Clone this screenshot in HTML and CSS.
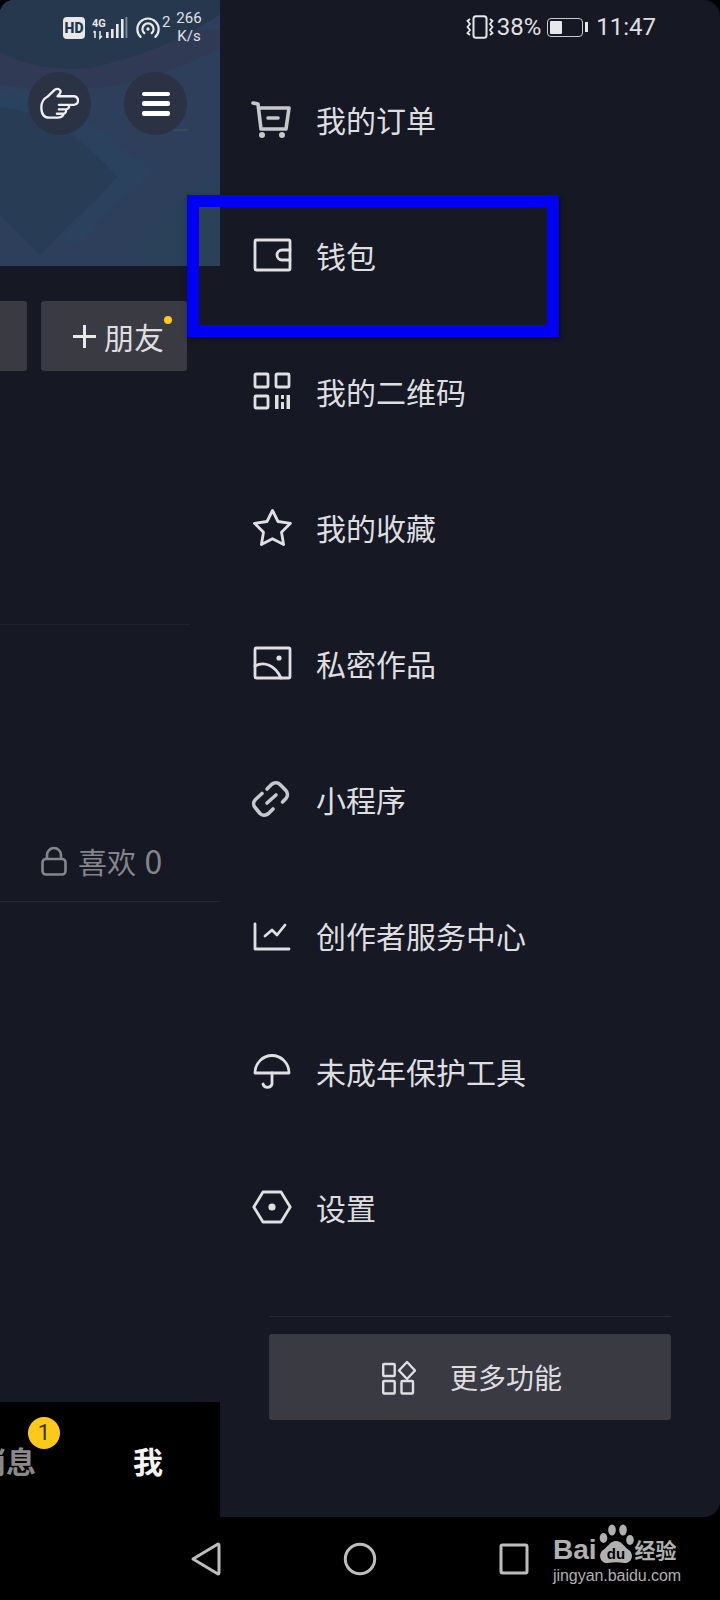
FILE: index.html
```html
<!DOCTYPE html>
<html lang="zh">
<head>
<meta charset="utf-8">
<title>我的</title>
<link rel="stylesheet" href="styles.css">
</head>
<body>
<div class="phone">
  <div class="main">
    <section class="profile">
      <div class="hero">
        <svg class="hero-art" viewBox="0 0 220 266" aria-hidden="true">
          <rect width="220" height="266" fill="#2d3f5a"/>
          <path d="M0 30 H220 V48 Q150 84 90 88 Q40 92 0 84 Z" fill="#303a54"/>
          <path d="M0 90 Q45 84 85 118 L153 170 L75 247 L64 236 L118 177 L60 120 L0 108 Z" fill="#2a425d"/>
          <path d="M0 107 Q60 112 117 177 L40 255 L0 215 Z" fill="#283d55"/>
          <path d="M130 250 L208 172 L220 184 L220 266 L145 266 Z" fill="#2b4059"/>
          <path d="M0 0 H220 V14 Q170 50 90 68 Q35 72 0 52 Z" fill="#25384e"/>
          <path d="M160 130 H188" stroke="#36495f" stroke-width="2"/>
        </svg>
        <div class="status status-left">
          <span class="hd">HD</span>
          <svg class="sig" viewBox="0 0 36 24" aria-hidden="true">
            <rect x="14" y="16" width="2.6" height="6" fill="#e8e8ea"/>
            <rect x="19" y="13" width="2.6" height="9" fill="#e8e8ea"/>
            <rect x="24" y="8" width="2.6" height="14" fill="#e8e8ea"/>
            <rect x="29" y="3" width="2.6" height="19" fill="#e8e8ea"/>
            <rect x="33.4" y="1" width="2" height="21" fill="#7c8592"/>
            <path d="M3 22 V15 M1.5 16.5 L3 15 M8 15 V22 L10 20" stroke="#e8e8ea" stroke-width="1.6" fill="none"/>
            <text x="0" y="11" class="sig-text">4G</text>
          </svg>
          <svg class="hot" viewBox="0 0 28 24" aria-hidden="true">
            <path d="M6 21 A11.5 11.5 0 1 1 22 21" fill="none" stroke="#e8e8ea" stroke-width="2.4" stroke-linecap="round"/>
            <path d="M10 17 A6 6 0 1 1 18 17" fill="none" stroke="#e8e8ea" stroke-width="2.4" stroke-linecap="round"/>
            <circle cx="14" cy="12.5" r="1.8" fill="#e8e8ea"/>
          </svg>
          <sup class="hot-n">2</sup>
          <span class="speed">266<br>K/s</span>
        </div>
        <div class="hero-actions">
          <button class="round" aria-label="手势">
            <svg class="hand" viewBox="124 260 124 100" aria-hidden="true">
              <path d="M131 322 C131 303 138 296 150 289 L172 268 C182 262 194 270 187 280 L180 288 L230 288 C246 290 246 312 230 314 L212 314 C217 318 216 326 206 328 L204 328 C208 332 205 340 198 341 C199 348 190 353 180 353 L155 353 C140 353 131 342 131 322 Z M184 314 H212 M184 328 H204 M178 341 H198" fill="none" stroke="#f0f0f2" stroke-width="7" stroke-linejoin="round" stroke-linecap="round"/>
            </svg>
          </button>
          <button class="round" aria-label="菜单">
            <span class="burger"><i></i><i></i><i></i></span>
          </button>
        </div>
      </div>
      <div class="actions">
        <div class="btn btn-cut"></div>
        <div class="btn btn-friend">
          <span class="plus"></span>
          <span>朋友</span>
          <span class="dot"></span>
        </div>
      </div>
      <div class="rule rule-short"></div>
      <div class="likes">
        <svg class="lock" viewBox="0 0 26 30" aria-hidden="true">
          <path d="M6 13 V9 A7 7 0 0 1 20 9 V13" fill="none" stroke="#85868c" stroke-width="2.6"/>
          <rect x="1.5" y="13" width="23" height="15.5" rx="3.5" fill="none" stroke="#85868c" stroke-width="2.6"/>
        </svg>
        <span>喜欢 <span class="likes-n">0</span></span>
      </div>
      <div class="rule"></div>
      <div class="tabs">
        <span class="tab tab-msg">消息<span class="badge">1</span></span>
        <span class="tab tab-me">我</span>
      </div>
    </section>

    <aside class="drawer">
      <div class="status status-right">
        <svg class="vib" viewBox="0 0 28 24" aria-hidden="true">
          <rect x="7.5" y="1.2" width="13" height="21.6" rx="2.5" fill="none" stroke="#e8e8ea" stroke-width="2"/>
          <path d="M4 4 L1.5 6 L4 9 L1.5 12 L4 15 L1.5 18 L4 20 M24 4 L26.5 6 L24 9 L26.5 12 L24 15 L26.5 18 L24 20" fill="none" stroke="#e8e8ea" stroke-width="1.8"/>
        </svg>
        <span class="pct">38%</span>
        <span class="battery"><span class="battery-fill"></span></span>
        <span class="clock">11:47</span>
      </div>
      <ul class="menu">
        <li class="item">
          <svg class="ico" viewBox="0 0 44 40" aria-hidden="true"><path class="st grey thick" d="M3 4 L8 5 L11 30 H36 L39 9 H10"/><path class="st grey thick" d="M18 19 H28"/><circle class="fl grey-f" cx="12" cy="36" r="3"/><circle class="fl grey-f" cx="32" cy="36" r="3"/></svg>
          <span>我的订单</span>
        </li>
        <li class="item">
          <svg class="ico" viewBox="0 0 44 40" aria-hidden="true"><rect class="st" x="5" y="5" width="35" height="30" rx="1.5"/><path class="st" d="M40 15 H32 A5 5 0 0 0 32 25 H40"/></svg>
          <span>钱包</span>
        </li>
        <li class="item">
          <svg class="ico" viewBox="0 0 44 40" aria-hidden="true"><rect class="st" x="5" y="3" width="13" height="13" rx="1"/><rect class="st" x="26" y="3" width="13" height="13" rx="1"/><rect class="st" x="5" y="25" width="13" height="12" rx="1"/><path class="fl" d="M25 24 H28.5 V38 H25 Z M31 24 H34 V28 H31 Z M31 31 H34 V38 H31 Z M36.5 24 H40 V38 H36.5 Z"/></svg>
          <span>我的二维码</span>
        </li>
        <li class="item">
          <svg class="ico" viewBox="0 0 44 40" aria-hidden="true"><path class="st" d="M22.5 3.5 L28 14.5 L40.5 16.3 L31.5 25.2 L33.6 37.5 L22.5 31.7 L11.4 37.5 L13.5 25.2 L4.5 16.3 L17 14.5 Z"/></svg>
          <span>我的收藏</span>
        </li>
        <li class="item">
          <svg class="ico" viewBox="0 0 44 40" aria-hidden="true"><rect class="st" x="5" y="5" width="35" height="30" rx="1.5"/><circle class="fl" cx="29" cy="15" r="2.6"/><path class="st" d="M5 23 C14 18 25 22 31 35"/></svg>
          <span>私密作品</span>
        </li>
        <li class="item">
          <svg class="ico" viewBox="0 0 44 40" aria-hidden="true"><path class="st thick grey" d="M17 10 L21.5 5.5 C24.5 3 28 3.5 30 5.5 L35.5 11 C38 13.5 38 17 36 19.5 L32.5 23"/><path class="st thick grey" d="M23 30 L18.5 34.5 C15.5 37 12 36.5 10 34.5 L5.5 29 C3 26.5 3 23 5.5 20.5 L12 14.5"/><path class="st thick grey" d="M17 24 L26 16"/></svg>
          <span>小程序</span>
        </li>
        <li class="item">
          <svg class="ico" viewBox="0 0 44 40" aria-hidden="true"><path class="st" d="M5 9 V34 H39"/><path class="st" d="M15 21 L22 15 L27 20 L35 10"/></svg>
          <span>创作者服务中心</span>
        </li>
        <li class="item">
          <svg class="ico" viewBox="0 0 44 40" aria-hidden="true"><path class="st" d="M5 22 A17 17.5 0 0 1 39 22 Z"/><path class="st" d="M22 22 V33 A4.7 4.7 0 0 1 13 33"/></svg>
          <span>未成年保护工具</span>
        </li>
        <li class="item">
          <svg class="ico" viewBox="0 0 44 40" aria-hidden="true"><path class="st" d="M3.8 20 L13 5 H31 L40.2 20 L31 35 H13 Z"/><circle class="fl" cx="22" cy="20" r="3.6"/></svg>
          <span>设置</span>
        </li>
      </ul>
      <div class="drawer-foot">
        <div class="more">
          <svg class="more-ico" viewBox="0 0 34 36" aria-hidden="true">
            <rect class="st thin" x="1.2" y="5" width="11.5" height="12" rx="1"/>
            <path class="st thin" d="M25 3 L33 11.5 L25 20 L17 11.5 Z"/>
            <rect class="st thin" x="1.2" y="22" width="11.5" height="12.5" rx="1"/>
            <rect class="st thin" x="19.5" y="22" width="11.5" height="12.5" rx="1"/>
          </svg>
          <span>更多功能</span>
        </div>
      </div>
    </aside>
  </div>

  <nav class="navbar">
    <svg class="nav-ico" viewBox="0 0 40 36" aria-hidden="true"><path d="M7 18 L32 3 Q33 3 33 5 V31 Q33 33 32 33 Z" fill="none" stroke="#bdbdbd" stroke-width="3" stroke-linejoin="round"/></svg>
    <svg class="nav-ico" viewBox="0 0 40 36" aria-hidden="true"><circle cx="20" cy="18" r="14.7" fill="none" stroke="#bdbdbd" stroke-width="3"/></svg>
    <svg class="nav-ico" viewBox="0 0 40 36" aria-hidden="true"><rect x="7" y="4" width="26" height="28" rx="1.5" fill="none" stroke="#bdbdbd" stroke-width="3"/></svg>
  </nav>

  <div class="watermark">
    <div class="wm-top">
      <span class="wm-bai">Bai</span>
      <svg class="wm-paw" viewBox="0 0 40 42" aria-hidden="true">
        <ellipse cx="14" cy="8" rx="3.8" ry="5.5" fill="#b0b0b0"/>
        <ellipse cx="25" cy="8" rx="3.8" ry="5.5" fill="#b0b0b0"/>
        <ellipse cx="5.5" cy="16" rx="3.8" ry="5" fill="#b0b0b0"/>
        <ellipse cx="32" cy="18" rx="3.8" ry="5" fill="#b0b0b0"/>
        <path d="M18 19 C24 19 26 25 31 28 C37 33 33 42 26 41 C21 40 15 40 10 41 C3 42 -1 33 5 28 C10 25 12 19 18 19 Z" fill="#b0b0b0"/>
        <text x="18" y="37" class="wm-du">du</text>
      </svg>
      <span class="wm-jy">经验</span>
    </div>
    <div class="wm-url">jingyan.baidu.com</div>
  </div>

  <div class="highlight"></div>
</div>
</body>
</html>
```

FILE: styles.css
```css
* { box-sizing: border-box; margin: 0; padding: 0; }

html, body { background: #000; }

body {
  width: 720px;
  height: 1600px;
  overflow: hidden;
  font-family: "Noto Sans CJK SC", "Noto Sans", sans-serif;
  color: #e0e0e2;
}

.phone {
  position: relative;
  width: 720px;
  height: 1600px;
  display: flex;
  flex-direction: column;
  background: #000;
}

.main {
  display: flex;
  height: 1517px;
}

/* left, partly covered profile page */
.profile {
  position: relative;
  width: 220px;
  height: 1517px;
  display: flex;
  flex-direction: column;
  overflow: hidden;
  background: #161823;
  border-top-left-radius: 14px;
}

.hero {
  position: relative;
  height: 266px;
  flex: none;
}

.hero-art {
  position: absolute;
  inset: 0;
  width: 220px;
  height: 266px;
  display: block;
}

.status {
  display: flex;
  align-items: center;
  font-family: Roboto, "Noto Sans", sans-serif;
}

.status-left {
  position: relative;
  height: 54px;
  padding-left: 63px;
  color: #e0e0e2;
}

.hd {
  width: 22px;
  height: 22px;
  border-radius: 4px;
  background: #e8e8ea;
  color: #22364a;
  font-size: 14px;
  font-weight: 900;
  line-height: 22px;
  text-align: center;
  margin-top: 1px;
}

.sig {
  width: 36px;
  height: 24px;
  margin-left: 7px;
  margin-top: 1px;
}

.sig-text {
  font-family: Roboto, sans-serif;
  font-size: 11px;
  font-weight: 700;
  fill: #e8e8ea;
}

.hot {
  width: 26px;
  height: 23px;
  margin-left: 7px;
  margin-top: 2px;
}

.hot-n {
  font-size: 15px;
  line-height: 1;
  margin-left: 1px;
  margin-top: -10px;
  width: 9px;
}

.speed {
  font-size: 15px;
  line-height: 18px;
  text-align: center;
  width: 30px;
  margin-left: 3px;
  margin-top: -1px;
}

.hero-actions {
  position: relative;
  display: flex;
  gap: 33px;
  padding-left: 28px;
  margin-top: 18px;
}

.round {
  width: 63px;
  height: 63px;
  border: 0;
  border-radius: 50%;
  background: #2a3243;
  display: flex;
  align-items: center;
  justify-content: center;
}

.hand {
  width: 41px;
  height: 33px;
  display: block;
}

.burger {
  width: 28px;
  height: 24px;
  display: flex;
  flex-direction: column;
  justify-content: space-between;
}

.burger i {
  display: block;
  height: 4.5px;
  border-radius: 2px;
  background: #fff;
}

.actions {
  display: flex;
  justify-content: flex-end;
  gap: 14px;
  height: 70px;
  margin-top: 35px;
  padding-right: 33px;
  flex: none;
}

.btn {
  height: 70px;
  border-radius: 3px;
  background: #3a3a43;
  flex: none;
}

.btn-cut { width: 100px; }

.btn-friend {
  position: relative;
  width: 146px;
  display: flex;
  align-items: center;
  gap: 8px;
  padding-left: 32px;
  font-size: 30px;
  line-height: 70px;
  color: #dedee0;
}

.plus {
  position: relative;
  width: 23px;
  height: 23px;
  flex: none;
}

.plus::before,
.plus::after {
  content: "";
  position: absolute;
  background: #e9e9ea;
}

.plus::before { left: 0; right: 0; top: 10px; height: 3px; }
.plus::after { top: 0; bottom: 0; left: 10px; width: 3px; }

.dot {
  position: absolute;
  right: 15px;
  top: 15px;
  width: 8px;
  height: 8px;
  border-radius: 50%;
  background: #fcc81a;
}

.rule {
  height: 1px;
  flex: none;
  background: #262833;
}

.rule-short {
  width: 190px;
  margin-top: 253px;
  background: #20222d;
}

.likes {
  display: flex;
  align-items: center;
  gap: 11px;
  height: 78px;
  margin-top: 198px;
  padding-left: 41px;
  padding-bottom: 2px;
  font-size: 29px;
  color: #85868c;
  flex: none;
}

.likes-n {
  font-size: 32px;
  line-height: 1;
  margin-left: 2px;
}

.lock {
  width: 26px;
  height: 30px;
  flex: none;
}

.tabs {
  margin-top: auto;
  height: 115px;
  flex: none;
  background: #000;
  display: flex;
  justify-content: flex-end;
  align-items: center;
  gap: 97px;
  padding-right: 57px;
  font-size: 30px;
  font-weight: 700;
}

.tab {
  position: relative;
  flex: none;
  line-height: 40px;
}

.tab-msg { color: #8a8a8a; }
.tab-me { color: #f4f4f4; }

.badge {
  position: absolute;
  right: -24px;
  top: -23px;
  width: 32px;
  height: 32px;
  border-radius: 50%;
  background: #fcc81a;
  color: #3a3216;
  font-family: Roboto, sans-serif;
  font-size: 22px;
  font-weight: 400;
  line-height: 32px;
  text-align: center;
}

/* right drawer */
.drawer {
  width: 500px;
  height: 1517px;
  background: #161823;
  border-top-right-radius: 16px;
  border-bottom-right-radius: 16px;
  display: flex;
  flex-direction: column;
}

.status-right {
  height: 51px;
  padding-top: 3px;
  padding-right: 64px;
  justify-content: flex-end;
  color: #e0e0e2;
}

.vib {
  width: 28px;
  height: 24px;
  margin-right: 3px;
}

.pct {
  font-size: 24px;
  line-height: 30px;
  margin-right: 6px;
}

.battery {
  position: relative;
  width: 36px;
  height: 19px;
  border: 1.5px solid #c9c9cc;
  border-radius: 4px;
  padding: 2px;
  margin-right: 9px;
}

.battery::after {
  content: "";
  position: absolute;
  right: -6px;
  top: 3px;
  width: 3px;
  height: 10px;
  background: #e8e8ea;
}

.battery-fill {
  display: block;
  width: 12px;
  height: 100%;
  background: #e8e8ea;
  border-radius: 1px;
}

.clock {
  font-size: 24px;
  line-height: 30px;
  margin-left: 4px;
}

.menu {
  list-style: none;
}

.item {
  height: 136px;
  display: flex;
  align-items: center;
  gap: 22px;
  padding-left: 30px;
  font-size: 30px;
  line-height: 40px;
  color: #dedee0;
}

.ico {
  width: 44px;
  height: 40px;
  flex: none;
  display: block;
}

.st {
  fill: none;
  stroke: #e0e0e2;
  stroke-width: 2.8;
  stroke-linejoin: round;
  stroke-linecap: round;
}

.st.grey { stroke: #c8c8cb; }
.st.thick { stroke-width: 3.6; }
.st.thin { stroke-width: 2.4; }
.fl { fill: #e0e0e2; }
.grey-f { fill: #c8c8cb; }

.drawer-foot {
  margin: 41px 49px 0;
  padding-top: 17px;
  border-top: 1px solid #262833;
}

.more {
  height: 86px;
  border-radius: 3px;
  background: #3a3a43;
  display: flex;
  align-items: center;
  justify-content: center;
  gap: 34px;
  padding-left: 4px;
  font-size: 28px;
  line-height: 40px;
  color: #dedee0;
}

.more-ico {
  width: 34px;
  height: 36px;
  flex: none;
}

/* android nav bar */
.navbar {
  height: 83px;
  display: flex;
  justify-content: center;
  align-items: center;
  gap: 114px;
}

.nav-ico {
  width: 40px;
  height: 36px;
  flex: none;
}

/* baidu watermark over the nav bar */
.watermark {
  position: absolute;
  left: 553px;
  top: 1522px;
  width: 130px;
  color: #b0b0b0;
}

.wm-top {
  display: flex;
  align-items: flex-end;
  height: 42px;
}

.wm-bai {
  font-family: "Liberation Sans", sans-serif;
  font-size: 28px;
  font-weight: 700;
  line-height: 30px;
  margin-bottom: -1px;
}

.wm-paw {
  width: 40px;
  height: 42px;
  flex: none;
  margin-left: 1px;
}

.wm-du {
  font-family: "Liberation Sans", sans-serif;
  font-size: 15px;
  font-weight: 700;
  text-anchor: middle;
  fill: #000;
}

.wm-jy {
  font-size: 21px;
  font-weight: 700;
  line-height: 30px;
  margin-left: -3px;
  white-space: nowrap;
}

.wm-url {
  font-family: "Liberation Sans", sans-serif;
  font-size: 16px;
  line-height: 20px;
  letter-spacing: -0.05px;
  margin-top: 2px;
  white-space: nowrap;
}

/* blue annotation rectangle */
.highlight {
  position: absolute;
  left: 187px;
  top: 195px;
  width: 372px;
  height: 142px;
  border: 12px solid #0000f5;
  box-shadow: 1px 2px 4px rgba(0, 0, 0, 0.5);
}
```
